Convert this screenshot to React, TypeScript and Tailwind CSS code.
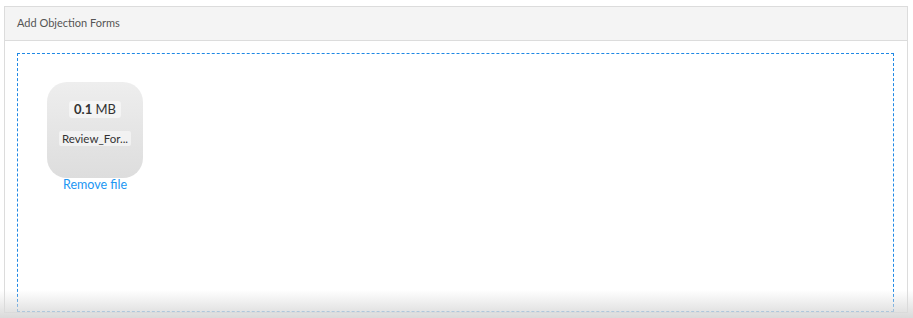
import React from 'react';

export default function App() {
  return (
    <div className="relative h-[318px] w-[913px] overflow-hidden bg-white font-['Lato','Open_Sans',sans-serif]">
      <div className="ml-[4px] mr-[5px] mt-[6px] border border-[#dcdcdc] bg-white">
        <div className="flex h-[34px] items-center border-b border-[#dcdcdc] bg-[#f4f4f4] px-[12px] text-[11px] text-[#555]">
          Add Objection Forms
        </div>
        <div className="pl-[12px] pr-[13px] pt-[12px]">
          <div className="h-[259px] border border-dashed border-[#1e88e5] px-[29px] pt-[28px]">
            <div className="flex w-[96px] flex-col items-center">
              <div className="flex h-[96px] w-[96px] flex-col items-center rounded-[20px] bg-gradient-to-b from-[#eeeeee] to-[#dddddd] pt-[19px]">
                <div className="rounded-[3px] bg-white/50 px-[5px] text-[13px] leading-[17px] text-[#333]">
                  <span className="font-bold">0.1</span> MB
                </div>
                <div className="mt-[13px] whitespace-nowrap rounded-[2px] bg-white/50 px-[3px] text-[11.5px] leading-[15px] text-[#333]">
                  Review_For...
                </div>
              </div>
              <a className="-mt-[1px] text-[12.5px] leading-[16px] text-[#2196f3]">Remove file</a>
            </div>
          </div>
        </div>
      </div>
      <div className="pointer-events-none absolute bottom-0 left-0 h-[28px] w-full bg-gradient-to-b from-white/0 to-[#dadada]" />
    </div>
  );
}
